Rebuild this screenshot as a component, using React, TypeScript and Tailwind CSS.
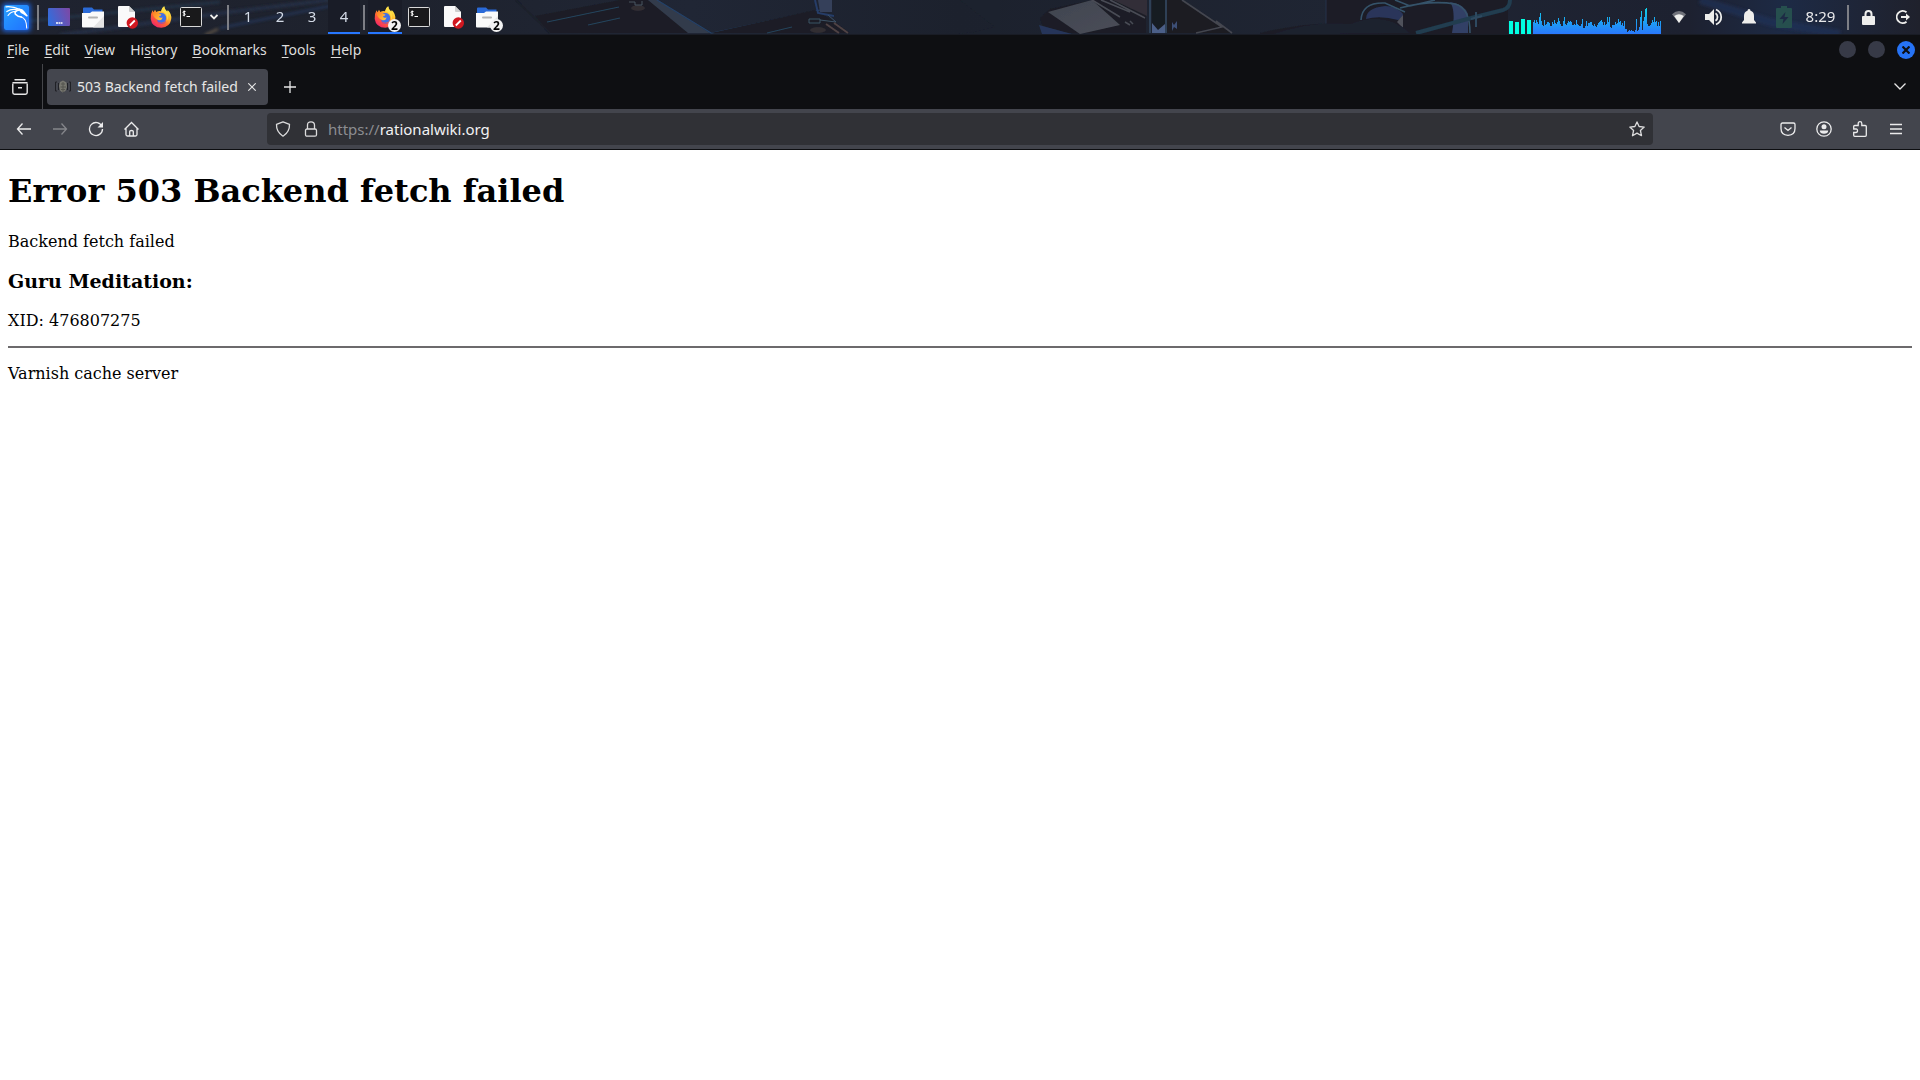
import React from "react";
import clsx from "clsx";

const CPU_HISTORY = [
  12, 14, 11, 14, 12, 10, 17, 21, 13, 9, 8, 14, 9, 10, 12, 12, 11, 8, 8, 12, 10,
  14, 11, 10, 12, 16, 13, 10, 8, 8, 13, 17, 10, 9, 11, 13, 12, 13, 12, 9, 9, 10,
  9, 14, 10, 9, 8, 8, 10, 15, 6, 6, 8, 13, 8, 11, 11, 12, 12, 9, 8, 10, 8, 7, 9,
  11, 12, 13, 14, 12, 9, 12, 9, 10, 17, 12, 17, 7, 6, 9, 9, 9, 12, 10, 11, 15,
  12, 13, 9, 11, 8, 13, 5, 5, 2, 3, 4, 3, 4, 3, 3, 2, 4, 15, 3, 4, 7, 17, 23, 4,
  13, 17, 25, 26, 10, 8, 8, 9, 11, 14, 12, 17, 12, 13, 8, 12, 8, 13,
];

const CORES = [13, 12, 15, 14];

const MENUS = [
  { name: "File", key: 0 },
  { name: "Edit", key: 0 },
  { name: "View", key: 0 },
  { name: "History", key: 2 },
  { name: "Bookmarks", key: 0 },
  { name: "Tools", key: 0 },
  { name: "Help", key: 0 },
];

/* Strip of desktop wallpaper that shows through the panel */
const PanelBackdrop = () => (
  <svg
    className="absolute inset-0 h-full w-full"
    viewBox="0 0 1920 35"
    preserveAspectRatio="none"
    aria-hidden="true"
  >
    <defs>
      <linearGradient id="panel" x1="0" x2="1" y1="0" y2="0">
        <stop offset="0" stopColor="#1f2330" />
        <stop offset="0.2" stopColor="#1e222d" />
        <stop offset="0.36" stopColor="#202635" />
        <stop offset="0.5" stopColor="#1c212d" />
        <stop offset="0.7" stopColor="#1f2533" />
        <stop offset="0.88" stopColor="#1d2130" />
        <stop offset="0.93" stopColor="#1d2a45" />
        <stop offset="1" stopColor="#1f212c" />
      </linearGradient>
      <linearGradient id="plate" x1="0" x2="1" y1="0" y2="1">
        <stop offset="0" stopColor="#40444f" />
        <stop offset="1" stopColor="#4a4e58" />
      </linearGradient>
      <filter id="soft">
        <feGaussianBlur stdDeviation="1.6" />
      </filter>
      <filter id="edge">
        <feGaussianBlur stdDeviation="0.6" />
      </filter>
    </defs>
    <rect width="1920" height="35" fill="url(#panel)" />
    <g filter="url(#soft)">
      <path d="M0 24 220 2" stroke="#28384f" strokeWidth="2" />
      <path d="M60 35 230 12 330 0" stroke="#27324a" strokeWidth="3" fill="none" />
      <path d="M220 28 330 6" stroke="#25406a" strokeWidth="1.5" />
      <path d="M205 35 218 29" stroke="#66594a" strokeWidth="2" />
      <path d="M1700 0 1770 22 1840 34" stroke="#22345a" strokeWidth="8" fill="none" opacity="0.6" />
    </g>
    <g filter="url(#edge)">
      <path d="M535 16 620 0H648L690 33H549z" fill="#1c1d25" />
      <path d="M516 0 550 33" stroke="#1b202b" strokeWidth="2" />
      <path d="M547 22 619 7M588 25 620 18" stroke="#25445d" strokeWidth="1.2" />
      <path d="M648 0H657L710 33H688z" fill="#323b4c" />
      <path d="M657 0 711 33H712L820 10" stroke="#25436a" strokeWidth="1.2" fill="none" />
      <path d="M711 33 815 10 832 20 850 33z" fill="#1c1d25" />
      <path d="M818 0H832V12H820z" fill="#35415a" />
      <path d="M815 0 818 13 834 16" stroke="#253c68" strokeWidth="2" fill="none" />
      <ellipse cx="638" cy="8" rx="7" ry="3" fill="#302d33" />
      <ellipse cx="818" cy="30" rx="8" ry="3" fill="#302d33" />
      <path d="M629 2h6v3h7V1" stroke="#465462" fill="none" />
      <path d="M809 19h11v4h-11zM820 20l16 2-8-7" stroke="#3d5266" fill="none" />
      <path d="M767 33 792 27" stroke="#25445d" />
      <path d="M826 24 839 33M834 23 848 33" stroke="#4f4344" strokeWidth="2" />
      <path d="M960 0 995 27 975 32 950 35H1000V0z" fill="#1c222d" />
      <path d="M1040 18 1050 9 1093 0H1146V33H1045z" fill="#1c1d26" />
      <path d="M1048 12 1092 0 1120 25 1080 34z" fill="url(#plate)" />
      <path d="M1039 25 1072 34H1042z" fill="#26365a" />
      <path d="M1092 0 1120 17M1101 0 1130 12M1110 0 1145 18" stroke="#494c55" strokeWidth="1.5" />
      <path d="M1113 0H1147V16z" fill="#302f37" />
      <path d="M1125 22 1130 25M1130 21 1133 24" stroke="#494c55" strokeWidth="1.5" />
      <path d="M1152 0H1165V33H1152z" fill="#191b23" />
      <path d="M1150 0V33M1166 0V33" stroke="#2e4056" strokeWidth="2" />
      <path d="M1152 23 1158 30 1165 24V33H1152z" fill="#4c5f88" />
      <path d="M1167 0H1182L1232 33H1167z" fill="#1b1c24" />
      <path d="M1172 22 1174 25 1177 21V29L1174 27 1172 31z" fill="#3d4f76" />
      <path d="M1182 0 1222 27 1196 33M1216 21 1232 33" stroke="#44464f" strokeWidth="1.6" fill="none" />
      <path d="M1260 33Q1310 22 1326 25V0H1508V35H1260z" fill="#1c1d26" />
      <path d="M1326 0V27" stroke="#25354a" />
      <path d="M1366 19Q1366 8 1385 6 1396 6 1403 14 1403 20 1398 20 1380 15 1366 19z" fill="#29365a" />
      <path d="M1450 2Q1464 4 1468 14L1468 33H1452Q1456 10 1450 2z" fill="#323f66" />
      <path d="M1361 20Q1362 2 1385 3L1405 12M1400 8Q1430 0 1455 4 1470 8 1470 33M1395 0 1410 6 1435 0" stroke="#36536a" strokeWidth="1.6" fill="none" />
      <path d="M1403 15V28L1397 22z" fill="#50515a" />
      <path d="M1416 33 1475 17 1503 10Q1510 8 1510 0" stroke="#203c50" strokeWidth="4" fill="none" />
      <path d="M1476 12V27M1471 19 1482 16" stroke="#2e4a60" strokeWidth="2" />
      <path d="M1270 35Q1310 20 1350 24 1385 10 1410 33z" fill="#1b202e" />
    </g>
    <rect y="34" width="1920" height="1" fill="#191c25" />
  </svg>
);

const KaliDragon = () => (
  <svg width="25" height="25" viewBox="0 0 25 25" fill="none" stroke="#fff" strokeLinecap="round">
    <path d="M2 1.800Q9 1.200 15.500 4.300" strokeWidth="1.300" />
    <path d="M2.800 6.500Q7.500 3.200 14 4.800" strokeWidth="1.200" />
    <path d="M4 10.500Q6.500 6.800 11.500 6.300" strokeWidth="1.100" />
    <path d="M14.500 3.600Q18.500 3.200 20.300 6.300L23.800 10.800 23 11.800 19.300 9.200Q16.500 8.500 15.500 6z" fill="#fff" stroke="none" />
    <path d="M15.500 5Q9.500 6 11.500 9.200 13.500 11.500 17.500 12" strokeWidth="1.700" />
    <path d="M17 12Q22.500 13 22.700 23" strokeWidth="1.100" />
  </svg>
);

const DesktopIcon = () => (
  <svg width="22" height="18" viewBox="0 0 22 18">
    <defs>
      <linearGradient id="desk" x1="0" x2="1" y1="0.6" y2="0.3">
        <stop offset="0" stopColor="#326ddc" />
        <stop offset="1" stopColor="#7a4aa8" />
      </linearGradient>
    </defs>
    <rect width="22" height="18" rx="1" fill="url(#desk)" />
    <path d="M8 15h2M10.500 15h2M13 15h1.500" stroke="#fff" strokeWidth="1.500" />
  </svg>
);

const FolderIcon = () => (
  <svg width="22" height="21" viewBox="0 0 22 21">
    <path d="M1 1.500Q1 .500 2 .500H10L12 2.500H20.500V8H1z" fill="#2a6ad8" />
    <path d="M0 6H8L10 4.500H22V19.500Q22 20.500 21 20.500H1Q0 20.500 0 19.500z" fill="#fafafa" />
    <path d="M22 9V20.500H11z" fill="#e4e4e4" />
    <rect x="6" y="9.500" width="10" height="2" rx="1" fill="#b4b4b4" />
  </svg>
);

const BlockedDocIcon = () => (
  <svg width="22" height="23" viewBox="0 0 22 23">
    <path d="M2 1Q2 0 3 0H13L19 6V21H3Q2 21 2 20z" fill="#fafafa" />
    <path d="M13 0 19 6H14Q13 6 13 5z" fill="#cfcfcf" />
    <circle cx="16.300" cy="17" r="5.700" fill="#d01820" />
    <path d="M13.800 19.500 18.800 14.500" stroke="#fff" strokeWidth="1.800" />
  </svg>
);

const FirefoxIcon = () => (
  <svg width="22" height="22" viewBox="0 0 22 22">
    <defs>
      <linearGradient id="fox" x1="0.85" x2="0.2" y1="0.1" y2="0.95">
        <stop offset="0" stopColor="#fff44f" />
        <stop offset="0.35" stopColor="#ffb32c" />
        <stop offset="0.6" stopColor="#ff6a2d" />
        <stop offset="1" stopColor="#f3236a" />
      </linearGradient>
      <linearGradient id="head" x1="0" x2="1" y1="0" y2="0.6">
        <stop offset="0" stopColor="#ff7a22" />
        <stop offset="1" stopColor="#ffc23a" />
      </linearGradient>
    </defs>
    <path
      d="M2.500 4.200 3.600 6.300 5 3.800 6.300 6Q8.500 4.600 11 5.200 11.500 2 14.200.300 14.300 3 17 5.400 17.800 5 17.700 4 22 8 21.200 13.200 20 21 11.300 21.800 2 21.500.700 13 .200 8 2.500 4.200z"
      fill="url(#fox)"
    />
    <circle cx="11.400" cy="11.900" r="4.800" fill="#3f6fe8" />
    <path d="M7 13.500Q9 18.500 14 16.500 16 15 16 12 17 18 11.500 18 7 18 7 13.500z" fill="#7a3be0" opacity="0.5" />
    <path d="M2.200 7Q5 5.700 7 7.300L11.500 8.400Q11 10 8.800 10.500 10 12.500 12.800 11.500 11.500 15 8 14 4 12.500 2.200 7z" fill="url(#head)" />
    <path d="M11 5.200Q16 6 17 11 17.500 14 15.600 16.500 20 12 17 5.400 14.300 3 14.200.300 11.500 2 11 5.200z" fill="#ffe14a" opacity="0.8" />
  </svg>
);

const TerminalIcon = () => (
  <svg width="22" height="20" viewBox="0 0 22 20">
    <rect x="0.5" y="0.5" width="21" height="19" rx="1" fill="#19191b" stroke="#d9d9d9" />
    <path d="M5.500 4.500H4Q3 4.500 3 5.300T4 6.300 5.200 7.200 4.200 8.200H2.800M4.200 3.500V9.300M6.500 9.500H10" stroke="#fff" fill="none" />
  </svg>
);

const icons = {
  desktop: <DesktopIcon />,
  folder: <FolderIcon />,
  doc: <BlockedDocIcon />,
  firefox: <FirefoxIcon />,
  terminal: <TerminalIcon />,
};

const LAUNCHERS = [
  { label: "Show desktop", icon: icons.desktop },
  { label: "File manager", icon: icons.folder },
  { label: "Text editor", icon: icons.doc },
  { label: "Web browser", icon: icons.firefox },
];

const WINDOWS = [
  { label: "Firefox", icon: icons.firefox, count: 2, active: true },
  { label: "Terminal", icon: icons.terminal },
  { label: "Editor", icon: icons.doc },
  { label: "Files", icon: icons.folder, count: 2 },
];

const Separator = () => <div className="mx-[3px] h-[25px] w-[2px] bg-[#7d7f86]" />;

const CpuGraph = () => (
  <svg width="152" height="34" viewBox="0 0 152 34" aria-hidden="true">
    <defs>
      <linearGradient id="cpu" gradientUnits="userSpaceOnUse" x1="0" x2="0" y1="6" y2="34">
        <stop offset="0" stopColor="#0fd8e4" />
        <stop offset="0.5" stopColor="#1ba6f2" />
        <stop offset="1" stopColor="#2a77fb" />
      </linearGradient>
    </defs>
    {CORES.map((h, i) => (
      <rect key={i} x={i * 6} y={34 - h} width="4" height={h} fill="#00ffe1" />
    ))}
    {CPU_HISTORY.map((h, i) => (
      <rect key={i} x={24 + i} y={34 - h} width="1" height={h} fill="url(#cpu)" />
    ))}
  </svg>
);

const TrayButton = ({ label, children }: { label: string; children: React.ReactNode }) => (
  <button aria-label={label} className="flex h-full w-[34px] items-center justify-center text-[#eeeeec]">
    {children}
  </button>
);

const Panel = () => (
  <header className="relative h-[35px] overflow-hidden">
    <PanelBackdrop />
    <div className="relative flex h-[34px] items-center">
      <button
        aria-label="Applications"
        className="mr-[5px] ml-[4px] h-[25px] w-[25px] rounded-xs bg-linear-to-br from-[#2aa0ff] to-[#2270ff] shadow-[0_0_4px_2px_#1c58c0]"
      >
        <KaliDragon />
      </button>
      <Separator />
      {LAUNCHERS.map((l) => (
        <button key={l.label} aria-label={l.label} className="flex h-full w-[34px] items-center justify-center">
          {l.icon}
        </button>
      ))}
      <button aria-label="Terminal" className="flex h-full w-[26px] items-center justify-center">
        <TerminalIcon />
      </button>
      <button aria-label="More terminals" className="flex h-full w-[20px] items-center justify-center">
        <svg width="8" height="6" viewBox="0 0 8 6" fill="none" stroke="#eeeeec" strokeWidth="1.8">
          <path d="M.5 1 4 4.500 7.500 1" />
        </svg>
      </button>
      <Separator />
      <nav className="flex h-full" aria-label="Workspaces">
        {["1", "2", "3", "4"].map((n) => (
          <button
            key={n}
            className={clsx(
              "w-[32px] border-b-2 text-[15px] text-[#d3dae6]",
              n === "4" ? "border-b-[#2777ff] bg-[#191c27]" : "border-b-transparent"
            )}
          >
            {n}
          </button>
        ))}
      </nav>
      <Separator />
      {WINDOWS.map((w) => (
        <button
          key={w.label}
          aria-label={w.label}
          className={clsx(
            "relative flex h-full w-[34px] items-center justify-center border-y-2 border-t-transparent",
            w.active ? "border-b-[#2777ff] bg-[#1a1d28]" : "border-b-transparent"
          )}
        >
          {w.icon}
          {w.count && (
            <span className="absolute right-px bottom-0 flex h-[13px] w-[13px] items-center justify-center rounded-full bg-[#f2f2f2] text-[12px] leading-none font-bold text-black">
              {w.count}
            </span>
          )}
        </button>
      ))}

      <div className="ml-auto flex h-full items-center gap-px">
        <CpuGraph />
        <TrayButton label="Network">
          <svg width="14" height="12" viewBox="0 0 14 12" fill="currentColor">
            <path d="M0 3.200Q7-3 14 3.200L7 12z" opacity="0.4" />
            <path d="M2.200 5Q7 1.500 11.800 5L7 12z" />
          </svg>
        </TrayButton>
        <TrayButton label="Volume">
          <svg width="18" height="18" viewBox="0 0 18 18" fill="none" stroke="currentColor" strokeWidth="1.8">
            <path d="M0 6H4L9 1V17L4 12H0z" fill="currentColor" stroke="none" />
            <path d="M10.500 5.200Q12.500 6.500 12.500 9T10.500 12.800M11 1.500Q16.200 4 16.200 9T11 16.500" />
          </svg>
        </TrayButton>
        <TrayButton label="Notifications">
          <svg width="14" height="16" viewBox="0 0 14 16" fill="currentColor">
            <path d="M7 0Q8.500 0 8.500 1.700 12 2.500 12 7V11L14 13.500V14.500H0V13.500L2 11V7Q2 2.500 5.500 1.700 5.500 0 7 0z" />
          </svg>
        </TrayButton>
        <TrayButton label="Battery">
          <svg width="16" height="22" viewBox="0 0 16 22">
            <path d="M5 0H11V2H15Q16 2 16 3V21Q16 22 15 22H1Q0 22 0 21V3Q0 2 1 2H5z" fill="#264f4e" />
            <path d="M9.500 6 3.500 13H7.500L6.500 18 12.500 11H8.500z" fill="#1d2a45" />
          </svg>
        </TrayButton>
        <time className="w-[37px] pb-px text-center text-[15px] text-[#e8e8ea]">8:29</time>
        <div className="mr-px ml-[7px] h-[25px] w-[2px] bg-[#7d7f86]" />
        <TrayButton label="Lock screen">
          <svg width="13" height="15" viewBox="0 0 13 15">
            <path d="M3.500 7V4Q3.500 1 6.500 1T9.500 4V7" fill="none" stroke="currentColor" strokeWidth="2" />
            <rect y="6" width="13" height="9" rx="1" fill="currentColor" />
          </svg>
        </TrayButton>
        <TrayButton label="Log out">
          <svg width="14" height="14" viewBox="0 0 14 14" fill="none" stroke="currentColor" strokeWidth="1.8">
            <path d="M10.500 2.300A6 6 0 1 0 10.500 11.700" />
            <path d="M5 7H11" strokeWidth="2" />
            <path d="M10 3.500 14 7 10 10.500z" fill="currentColor" stroke="none" />
          </svg>
        </TrayButton>
      </div>
    </div>
  </header>
);

const MenuBar = () => (
  <div className="flex h-[29px] items-center gap-px bg-[#0e0f12] text-[14px] text-[#dededd]">
    {MENUS.map(({ name, key }) => (
      <button key={name} className="px-[7px]">
        {name.slice(0, key)}
        <span className="underline underline-offset-2">{name[key]}</span>
        {name.slice(key + 1)}
      </button>
    ))}
    <div className="mr-[5px] ml-auto flex items-center gap-[12px]">
      <button aria-label="Minimize" className="h-[17px] w-[17px] rounded-full bg-[#373a47]" />
      <button aria-label="Maximize" className="h-[17px] w-[17px] rounded-full bg-[#373a47]" />
      <button
        aria-label="Close window"
        className="flex h-[18px] w-[18px] items-center justify-center rounded-full bg-[#2673f5]"
      >
        <svg width="8" height="8" viewBox="0 0 8 8" stroke="#0e0f12" strokeWidth="2.2">
          <path d="M.5.5 7.500 7.500M7.500.5.5 7.500" />
        </svg>
      </button>
    </div>
  </div>
);

const TabBar = () => (
  <div className="flex h-[45px] items-center bg-[#0e0f12] text-[#e6e6e6]">
    <button aria-label="Tab overview" className="flex h-full w-[42px] items-center justify-center pr-[2px]">
      <svg width="16" height="16" viewBox="0 0 16 16" fill="none" stroke="currentColor" strokeWidth="1.4">
        <path d="M3 .8H13M1 3.800H15" strokeLinecap="round" />
        <path d="M.8 4.500V13.500Q.8 15.200 2.500 15.200H13.500Q15.200 15.200 15.200 13.500V4.500M6 8.800H10" />
      </svg>
    </button>
    <div className="mr-[4px] h-full w-px bg-[#45464a]" />
    <div className="flex h-[36px] w-[221px] items-center rounded-sm bg-[#44464e] px-[8px]">
      <svg width="16" height="16" viewBox="0 0 16 16" className="mr-[6px] shrink-0" aria-hidden="true">
        <path d="M2 3H.5V12H2M14 3H15.500V12H14M3.500 4V11M12.500 4V11" stroke="#202126" fill="none" />
        <path d="M5 3 8 1.500 11.500 3.500 12 8 10.500 12 7.500 13.500 5 11.500 4 7z" fill="#77776f" />
        <path d="M6 5H10M5.500 8H11M8 3V13M6 10.500H10" stroke="#55554f" />
      </svg>
      <span className="text-[14px] whitespace-nowrap">503 Backend fetch failed</span>
      <button aria-label="Close tab" className="ml-auto flex h-[16px] w-[16px] items-center justify-center">
        <svg width="8" height="8" viewBox="0 0 8 8" stroke="currentColor" strokeWidth="1.1">
          <path d="M.3.3 7.700 7.700M7.700.3.3 7.700" />
        </svg>
      </button>
    </div>
    <button aria-label="New tab" className="flex h-full w-[43px] items-center justify-center">
      <svg width="12" height="12" viewBox="0 0 12 12" stroke="currentColor" strokeWidth="1.3">
        <path d="M6 0V12M0 6H12" />
      </svg>
    </button>
    <button aria-label="List all tabs" className="mr-[2px] ml-auto flex h-full w-[36px] items-center justify-center">
      <svg width="12" height="7" viewBox="0 0 12 7" fill="none" stroke="currentColor" strokeWidth="1.3">
        <path d="M.5.5 6 6 11.500.5" />
      </svg>
    </button>
  </div>
);

const ToolButton = ({ label, muted, children }: { label: string; muted?: boolean; children: React.ReactNode }) => (
  <button
    aria-label={label}
    disabled={muted}
    className={clsx(
      "flex h-[36px] w-[36px] shrink-0 items-center justify-center",
      muted ? "text-[#85868b]" : "text-[#ebebec]"
    )}
  >
    <svg width="16" height="16" viewBox="0 0 16 16" fill="none" stroke="currentColor" strokeWidth="1.3">
      {children}
    </svg>
  </button>
);

const NavBar = () => (
  <div className="flex h-[41px] items-center border-b border-b-[#0d0e11] bg-[#43454d] px-[6px]">
    <ToolButton label="Back">
      <path d="M6.500 2.500 1.500 8 6.500 13.500M1.500 8H15" />
    </ToolButton>
    <ToolButton label="Forward" muted>
      <path d="M9.500 2.500 14.500 8 9.500 13.500M14.500 8H1" />
    </ToolButton>
    <ToolButton label="Reload">
      <path d="M14 5.500A6.500 6.500 0 1 0 14.500 8" />
      <path d="M15 1V6.500H9.500z" fill="currentColor" stroke="none" />
    </ToolButton>
    <ToolButton label="Home">
      <path d="M.5 8.500 7.500 1.500 14.500 8.500M2 7.500V13.500Q2 15 3.500 15H11.500Q13 15 13 13.500V7.500M5.700 15V10.500Q5.700 9.500 7.500 9.500T9.300 10.500V15" />
    </ToolButton>
    <div className="w-[117px] shrink" />
    <div className="flex h-[32px] min-w-0 flex-1 items-center rounded-sm bg-[#303136] text-[#dcdcdd]">
      <button aria-label="Tracking protection" className="flex h-full w-[32px] items-center justify-center">
        <svg width="16" height="16" viewBox="0 0 16 16" fill="none" stroke="currentColor" strokeWidth="1.3">
          <path d="M8 .8 14.500 3.300Q14.800 11 8 15.200 1.200 11 1.500 3.300z" strokeLinejoin="round" />
        </svg>
      </button>
      <button aria-label="Site information" className="flex h-full w-[24px] items-center justify-center">
        <svg width="16" height="16" viewBox="0 0 16 16" fill="none" stroke="currentColor" strokeWidth="1.3">
          <path d="M4.500 8V4Q4.500.8 8 .8T11.500 4V8" />
          <rect x="2.500" y="8" width="11" height="7.200" rx="1.500" />
        </svg>
      </button>
      <label htmlFor="url" className="pl-[5px] text-[15px] text-[#8c8d91]">
        https://
      </label>
      <input
        id="url"
        defaultValue="rationalwiki.org"
        className="min-w-0 flex-1 bg-transparent text-[15px] text-[#f2f2f3] outline-none"
      />
      <button aria-label="Bookmark this page" className="flex h-full w-[32px] items-center justify-center">
        <svg width="16" height="16" viewBox="0 0 16 16" fill="none" stroke="currentColor" strokeWidth="1.3">
          <path
            d="M8 .9 10.100 5.500 15.200 6.100 11.400 9.500 12.500 14.700 8 12.100 3.500 14.700 4.600 9.500.8 6.100 5.900 5.500z"
            strokeLinejoin="round"
          />
        </svg>
      </button>
    </div>
    <div className="w-[117px] shrink" />
    <ToolButton label="Save to Pocket">
      <path d="M2.500 2H13.500Q15 2 15 3.500V7.500Q15 14 8 14.300 1 14 1 7.500V3.500Q1 2 2.500 2zM4.500 6.500 8 9.500 11.500 6.500" />
    </ToolButton>
    <ToolButton label="Account">
      <circle cx="8" cy="8" r="7.200" />
      <circle cx="8" cy="5.800" r="2.500" fill="currentColor" stroke="none" />
      <path d="M3.800 9.500H12.200Q12 12.800 8 12.800T3.800 9.500z" fill="currentColor" stroke="none" />
    </ToolButton>
    <ToolButton label="Extensions">
      <path d="M1.700 8V5.500Q1.700 4.500 2.700 4.500H6.200V2.500Q6.200 .700 8 .700T9.800 2.500V4.500H13.200Q14.300 4.500 14.300 5.500V14.200Q14.300 15.300 13.200 15.300H2.700Q1.700 15.300 1.700 14.200V11.500H4Q5.500 11.500 5.500 9.700T4 8z" />
    </ToolButton>
    <ToolButton label="Menu">
      <path d="M2 3.500H14M2 8H14M2 12.500H14" />
    </ToolButton>
  </div>
);

const ErrorPage = () => (
  <main className="bg-white px-2 pt-[22px] font-['DejaVu_Serif',serif] text-[16px] leading-[19px] text-black">
    <h1 className="mb-[22px] text-[32px] leading-[38px] font-bold">Error 503 Backend fetch failed</h1>
    <p>Backend fetch failed</p>
    <h3 className="my-[19px] text-[19px] leading-[22px] font-bold">Guru Meditation:</h3>
    <p>XID: 476807275</p>
    <hr className="my-4 h-[2px] border-0 bg-[#6c6a6c]" />
    <p>Varnish cache server</p>
  </main>
);

const App: React.FC = () => (
  <div className="min-h-screen bg-white font-['Noto_Sans',sans-serif]">
    <Panel />
    <MenuBar />
    <TabBar />
    <NavBar />
    <ErrorPage />
  </div>
);

export default App;
